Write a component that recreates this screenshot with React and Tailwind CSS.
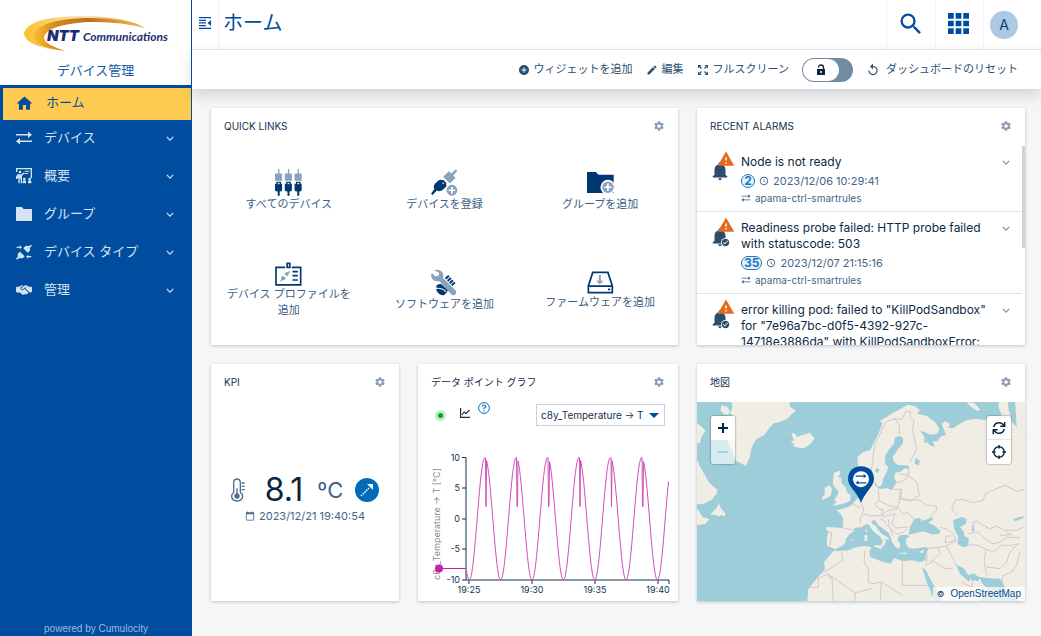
import { useState } from 'react';
import {
  MdHome, MdSearch, MdSettings, MdAddCircle, MdEdit, MdNotifications,
  MdWarning, MdAccessTime, MdCheckCircle, MdCalendarToday, MdReplay
} from 'react-icons/md';
import { FaHandshakeSimple } from 'react-icons/fa6';

const SwapIcon = ({ className }) => (
  <svg viewBox="0 0 16 14" className={className} fill="currentColor" aria-hidden="true">
    <path d="M0 3h12V.6L16 3.800 12 7V4.500H0zM16 11H4v2.400L0 10.200 4 7v2.500h12z" />
  </svg>
);

const PresentIcon = ({ className }) => (
  <svg viewBox="0 0 48 48" className={className} fill="currentColor" aria-hidden="true">
    <path d="M0 0h48v30h-4V4H4v8H0zM26 8h14v3H26zM26 15h10v3H26z" />
    <circle cx="12" cy="12" r="4" />
    <path d="M4 19h12l8-6 2 3-8 7v23h-4V32h-3v14H7V29l-4 4H0v-6z" />
    <circle cx="25" cy="33" r="4" />
    <circle cx="41" cy="33" r="4" />
    <path d="M20 46v-6q0-3 5-3t5 3v6zM36 46v-6q0-3 5-3t5 3v6z" />
  </svg>
);

const FolderIcon = ({ className }) => (
  <svg viewBox="0 0 16 14" className={className} fill="currentColor" aria-hidden="true">
    <path d="M0 0h6l1.500 2H16v12H0z" />
  </svg>
);

const PlugTypeIcon = ({ className }) => (
  <svg viewBox="0 0 48 48" className={className} fill="currentColor" aria-hidden="true">
    <path d="M2 8h9V4l7 6-7 6v-4H2zM46 36h-9v-4l-7 6 7 6v-4h9z" />
    <path d="M45 2l3 3-7 7q4 6-2 11l-4 3-13-13 3-4q7-6 13-2zM3 47l-3-3 6-7q-3-6 2-11l4-3 14 14-4 4q-7 4-12 1z" />
  </svg>
);

const ChevronIcon = ({ className }) => (
  <svg viewBox="0 0 10 6" className={className} fill="none" stroke="currentColor" strokeWidth="1.500" aria-hidden="true">
    <path d="M1 1l4 4 4-4" />
  </svg>
);

const CollapseIcon = () => (
  <svg viewBox="0 0 12 12" className="size-3" fill="currentColor" aria-hidden="true">
    <path d="M0 0h12v1.300H0zM0 2.700h7V4H0zM0 5.300h7v1.300H0zM0 8h7v1.300H0zM0 10.700h12V12H0zM12 3v6L8.500 6z" />
  </svg>
);

const AppsIcon = () => (
  <svg viewBox="0 0 22 22" className="size-[21px]" fill="currentColor" aria-hidden="true">
    <path d="M0 0h6v6H0zM8 0h6v6H8zM16 0h6v6h-6zM0 8h6v6H0zM8 8h6v6H8zM16 8h6v6h-6zM0 16h6v6H0zM8 16h6v6H8zM16 16h6v6h-6z" />
  </svg>
);

const ExpandIcon = () => (
  <svg viewBox="0 0 12 12" className="size-3" aria-hidden="true">
    <path d="M2 2l2.500 2.500M10 2L7.500 4.500M2 10l2.500-2.500M10 10L7.500 7.500" stroke="currentColor" strokeWidth="1.200" />
    <path d="M1 1h3.500L1 4.500zM11 1v3.500L7.500 1zM1 11V7.500L4.500 11zM11 11H7.500L11 7.500z" fill="currentColor" />
  </svg>
);

const UnlockIcon = () => (
  <svg viewBox="0 0 10 12" className="h-3 w-2.5" aria-hidden="true">
    <path d="M2.500 3.500Q2.500 1 5 1t2.500 2.500V6" fill="none" stroke="currentColor" strokeWidth="1.400" />
    <path d="M1 5h8v6H1z" fill="currentColor" />
    <circle cx="5" cy="8" r="1" fill="#fff" />
  </svg>
);

/* Two-tone quick link icons */
const DevicesIcon = () => (
  <svg viewBox="0 0 80 80" className="size-[27px]" aria-hidden="true">
    {[0, 29, 58].map(x => (
      <g key={x} transform={`translate(${x} 0)`}>
        <path d="M9 0h4v13h8v22H0V13h9z" fill="#89a2bf" />
        <path d="M4 38h14v6h3v19q-1 4-7 4v12H8V67q-7 0-8-4V44h4z" fill="#003871" />
        <path d="M8 41h6v4H8z" fill="#d5dfeb" />
      </g>
    ))}
  </svg>
);

const RegisterIcon = () => (
  <svg viewBox="0 0 80 80" className="size-[27px]" aria-hidden="true">
    <path d="M73 1l5 5-12 13 7 7-17 17-20-20 17-16 7 6z" fill="#89a2bf" />
    <path d="M23 33q8-3 15 3t8 15l-10 10q-9 8-19 3L5 77l-5-4 10-14q-5-8 3-17z" fill="#003871" />
    <path d="M30 36l6-4 10 10-4 6z" fill="#003871" />
    <path d="M34 40l4 4" stroke="#fff" strokeWidth="3" />
    <circle cx="62" cy="63" r="16" fill="#89a2bf" />
    <path d="M62 53v20M52 63h20" stroke="#fff" strokeWidth="5" />
  </svg>
);

const AddGroupIcon = () => (
  <svg viewBox="0 0 80 80" className="size-[27px]" aria-hidden="true">
    <path d="M0 9h26l8 8h45v54H0z" fill="#003871" />
    <circle cx="62" cy="54" r="22" fill="#fff" />
    <circle cx="62" cy="54" r="17" fill="#89a2bf" />
    <path d="M62 43v22M51 54h22" stroke="#fff" strokeWidth="5" />
  </svg>
);

const ProfileIcon = () => (
  <svg viewBox="0 0 80 72" className="h-6 w-[27px]" aria-hidden="true">
    <path d="M30 16H2.500v52.500h74V16H50" fill="none" stroke="#003871" strokeWidth="5" />
    <path d="M36 4h8v12h-8z" fill="none" stroke="#003871" strokeWidth="5" />
    <path d="M52 29h16M52 41h16M52 54h16" stroke="#003871" strokeWidth="5" />
    <path d="M43 27l2 3-5 5q1 7-4 8l-8-7q2-6 8-5zM15 57l3-6q-1-8 6-10l8 7q-2 8-10 6l-5 5z" fill="#89a2bf" />
  </svg>
);

const SoftwareIcon = () => (
  <svg viewBox="0 0 80 80" className="size-[27px]" aria-hidden="true">
    <path d="M9 3q19-4 26 9 3 8 0 14l38 38q4 8-2 12-7 4-12-2L25 36Q8 39 2 26q-3-7 0-14l11 10 10-3 1-8z" fill="#89a2bf" />
    <path d="M16 49q12-8 18-1l16 16q-4 10-12 14Q24 79 16 64z" fill="#003871" />
    <path d="M46 22l22 24" stroke="#003871" strokeWidth="13" strokeDasharray="6 3" />
    <path d="M14 58q15-3 24 4l7 6" fill="none" stroke="#fff" strokeWidth="3" />
  </svg>
);

const FirmwareIcon = () => (
  <svg viewBox="0 0 80 68" className="h-[23px] w-[27px]" aria-hidden="true">
    <path d="M17 4h45l13 40v20H4V44zM4 45h72" fill="none" stroke="#003871" strokeWidth="5" />
    <path d="M35 12h6v17h8L38 40 27 29h8z" fill="#89a2bf" />
    <path d="M62 52h7v5h-7z" fill="#003871" />
  </svg>
);

const ThermometerIcon = () => (
  <svg viewBox="0 0 42 70" className="h-6 w-[14px] text-[#4d6d8c]" fill="none" stroke="currentColor" strokeWidth="4" aria-hidden="true">
    <path d="M8 42V12Q9 2 18 2t10 10v30q7 5 7 12-2 13-17 14Q3 67 2 54q0-7 6-12zM18 50V30M32 14h9M32 24h9M32 34h9" />
    <circle cx="18" cy="53" r="8" fill="currentColor" stroke="none" />
  </svg>
);

const Logo = () => (
  <svg viewBox="0 0 150 38" className="h-[38px] w-[150px]" role="img" aria-label="NTT Communications">
    <defs>
      <linearGradient id="swoosh" x1="0" x2="1">
        <stop offset="0" stopColor="#fdc030" />
        <stop offset=".2" stopColor="#d08a1e" />
        <stop offset=".5" stopColor="#c07020" />
        <stop offset="1" stopColor="#f0bf55" />
      </linearGradient>
      <linearGradient id="swooshLight" x1="0" x2="1">
        <stop offset="0" stopColor="#fdc030" />
        <stop offset=".5" stopColor="#f8e0b0" />
        <stop offset="1" stopColor="#e8a030" />
      </linearGradient>
    </defs>
    <path d="M45 37Q3 33 3 19 7 3 58 2 105 2 124 14 98 6 66 6 20 10 17 23q2 9 28 14z" fill="url(#swooshLight)" />
    <path d="M45 37Q10 33 12 20 20 6 62 4q40-1 62 10Q98 7 66 8 24 11 23 24q1 7 22 13z" fill="url(#swoosh)" />
    <text x="26" y="27" fill="#1b2c72" fontFamily="Inter, sans-serif" fontWeight="900" fontStyle="italic" fontSize="15">NTT</text>
    <text x="62" y="27" fill="#1b2c72" fontFamily="Lato, sans-serif" fontWeight="700" fontStyle="italic" fontSize="12">Communications</text>
  </svg>
);

const NAV_ITEMS = [
  { label: 'デバイス', icon: SwapIcon, size: 'h-3.5 w-4' },
  { label: '概要', icon: PresentIcon, size: 'size-4' },
  { label: 'グループ', icon: FolderIcon, size: 'h-3.5 w-4' },
  { label: 'デバイス タイプ', icon: PlugTypeIcon, size: 'size-4' },
  { label: '管理', icon: FaHandshakeSimple, size: 'size-4' }
];

const QUICK_LINKS = [
  { label: 'すべてのデバイス', icon: DevicesIcon },
  { label: 'デバイスを登録', icon: RegisterIcon },
  { label: 'グループを追加', icon: AddGroupIcon },
  { label: 'デバイス プロファイルを追加', icon: ProfileIcon },
  { label: 'ソフトウェアを追加', icon: SoftwareIcon },
  { label: 'ファームウェアを追加', icon: FirmwareIcon }
];

const ALARMS = [
  { text: 'Node is not ready', count: 2, time: '2023/12/06 10:29:41', source: 'apama-ctrl-smartrules', ack: false },
  { text: 'Readiness probe failed: HTTP probe failed with statuscode: 503', count: 35, time: '2023/12/07 21:15:16', source: 'apama-ctrl-smartrules', ack: true },
  { text: 'error killing pod: failed to "KillPodSandbox" for "7e96a7bc-d0f5-4392-927c-14718e3886da" with KillPodSandboxError:', ack: true }
];

const Sidebar = () => (
  <aside className="flex w-48 shrink-0 flex-col bg-[#004d9f]">
    <div className="mr-px flex h-[85px] flex-col items-center bg-white pt-3.5">
      <Logo />
      <div className="mt-2 text-[13px] leading-5 text-[#1357a5]">デバイス管理</div>
    </div>
    <nav className="flex flex-1 flex-col pt-[3px] text-[13px] text-[#d5e2f0]">
      <a href="#home" className="mr-px ml-[3px] flex h-8 items-center bg-[#ffcb52] pb-0.5 pl-3 text-[#004d9f]">
        <MdHome className="size-[19px]" />
        <span className="ml-3">ホーム</span>
      </a>
      {NAV_ITEMS.map(({ label, icon: Icon, size }) => (
        <a key={label} href={`#${label}`} className="flex h-[38px] items-center pr-[18px] pb-0.5 pl-4">
          <Icon className={size} />
          <span className="ml-3 flex-1">{label}</span>
          <ChevronIcon className="h-[5px] w-2" />
        </a>
      ))}
    </nav>
    <div className="text-center font-['Liberation_Sans',sans-serif] text-[10px] leading-[14px] text-[#9dbbdc]">powered by Cumulocity</div>
  </aside>
);

const Header = () => (
  <header className="flex h-[50px] border-b border-[#e2e4e6] bg-white text-[#004d9f]">
    <button aria-label="ナビゲーション" className="flex w-[27px] items-center justify-center border-r border-gray-100 pb-1">
      <CollapseIcon />
    </button>
    <h1 className="flex-1 pt-2 pl-1 text-xl leading-[30px]">ホーム</h1>
    <button aria-label="検索" className="flex w-[49px] items-center justify-center border-l border-gray-100 pb-0.5">
      <MdSearch className="size-7" />
    </button>
    <button aria-label="アプリケーション" className="flex w-12 items-center justify-center border-l border-gray-100 pr-0.5 pb-0.5">
      <AppsIcon />
    </button>
    <div className="flex w-[58px] items-center border-l border-gray-100 pl-1.5">
      <button className="size-7 rounded-full bg-[#adc8e2] text-sm text-[#0b3d70]">A</button>
    </div>
  </header>
);

const ActionBar = () => {
  const [locked, setLocked] = useState(false);

  return (
    <div className="relative z-10 flex h-[39px] items-center justify-end gap-[13px] bg-white pr-[23px] text-[11px] whitespace-nowrap text-[#2c4f70] shadow-[0_6px_14px_rgba(40,55,75,0.18)]">
      <button className="flex items-center gap-1"><MdAddCircle className="size-3" />ウィジェットを追加</button>
      <button className="flex items-center gap-1"><MdEdit className="size-3" />編集</button>
      <button className="flex items-center gap-1"><ExpandIcon />フルスクリーン</button>
      <label className="relative flex">
        <input
          type="checkbox"
          aria-label="ロック"
          checked={locked}
          onChange={e => setLocked(e.target.checked)}
          className="h-6 w-[51px] appearance-none rounded-full bg-[#728ba5]"
        />
        <span className="pointer-events-none absolute top-px left-px flex h-[22px] w-9 items-center justify-center rounded-full bg-white text-[#0a2540]">
          <UnlockIcon />
        </span>
      </label>
      <button className="flex items-center gap-1.5"><MdReplay className="size-3.5" />ダッシュボードのリセット</button>
    </div>
  );
};

const Card = ({ title, className = '', children }) => (
  <section className={`flex min-w-0 flex-col overflow-hidden bg-white shadow-[0_1px_3px_rgba(30,60,90,0.28)] ${className}`}>
    <div className="flex h-[38px] shrink-0 items-center justify-between px-[13px] pb-0.5">
      <h2 className="text-[10px] text-[#14324d]">{title}</h2>
      <button aria-label="設定" className="text-[#8a9cb1]"><MdSettings className="size-3" /></button>
    </div>
    {children}
  </section>
);

const QuickLinks = () => (
  <Card title="QUICK LINKS" className="col-span-2">
    <div className="grid flex-1 grid-cols-3 grid-rows-2">
      {QUICK_LINKS.map(({ label, icon: Icon }) => (
        <a key={label} href={`#${label}`} className="flex flex-col items-center justify-center px-3 pb-2.5 text-center text-[11px] leading-4 text-[#3a5f84]">
          <Icon />
          <span>{label}</span>
        </a>
      ))}
    </div>
  </Card>
);

const RecentAlarms = () => (
  <Card title="RECENT ALARMS">
    <div className="flex min-h-0 flex-1">
      <ul className="min-w-0 flex-1 overflow-hidden">
        {ALARMS.map(alarm => (
          <li key={alarm.text} className="flex border-b border-[#dfe2e5] px-3 pt-2 pb-[5px]">
            <div className="relative mr-2 h-7 w-6 shrink-0 text-[#2b4d6e]">
              <MdNotifications className="absolute top-1.5 left-0 size-[22px]" />
              <MdWarning className="absolute -top-1 left-2 size-[18px] text-[#e56a1f]" />
              {alarm.ack && <MdCheckCircle className="absolute top-[18px] left-3 size-[9px] rounded-full bg-white" />}
            </div>
            <div className="min-w-0 flex-1">
              <p className="text-xs leading-4 text-[#0b2a45]">{alarm.text}</p>
              {alarm.time && (
                <>
                  <div className="mt-0.5 flex h-[18px] items-center gap-1 text-[11px] text-[#43658a]">
                    <span className="min-w-3.5 rounded-full border border-[#1776bf] bg-[#e8f3fb] px-0.5 text-center text-xs leading-3 font-bold text-[#1776bf]">{alarm.count}</span>
                    <MdAccessTime className="size-2.5" />
                    <span>{alarm.time}</span>
                  </div>
                  <div className="flex h-4 items-center gap-1 text-[10px] text-[#43658a]">
                    <SwapIcon className="h-2 w-2.5" />
                    {alarm.source}
                  </div>
                </>
              )}
            </div>
            <button aria-label="詳細" className="ml-1 flex h-4 items-center text-[#7f94aa]">
              <ChevronIcon className="h-[5px] w-2" />
            </button>
          </li>
        ))}
      </ul>
      <div className="h-[102px] w-[3px] bg-[#cfd2d5]" />
    </div>
  </Card>
);

const Kpi = () => (
  <Card title="KPI">
    <div className="flex flex-1 flex-col items-center justify-center pb-2">
      <div className="flex items-center">
        <ThermometerIcon />
        <span className="ml-5 text-[32px] leading-9 text-[#0a2540]">8.1</span>
        <span className="ml-3.5 text-[22px] leading-9 text-[#3f648a]">ºC</span>
        <span className="ml-3 flex size-6 items-center justify-center rounded-full bg-[#006cb8] text-white">
          <svg viewBox="0 0 14 14" className="size-3.5" aria-hidden="true">
            <path d="M1 13l8-8" stroke="currentColor" strokeWidth="1.500" strokeDasharray="1.500 1" />
            <path d="M7 1h6v6z" fill="currentColor" />
          </svg>
        </span>
      </div>
      <div className="flex items-center gap-1 text-[11px] leading-4 text-[#43658a]">
        <MdCalendarToday className="size-2.5" />
        2023/12/21 19:40:54
      </div>
    </div>
  </Card>
);

const yFor = v => 78.75 - v * 6.125;

const buildCurve = () => {
  const period = 31.35;
  const points = [];
  for (let x = 48.5; x <= 250.7; x += 0.5) {
    const phase = (((x - 51.3) / period) % 1 + 1) % 1;
    let v = -10 * Math.cos(phase * 2 * Math.PI);
    // the sensor reports a short drop right after every peak
    if (phase > 0.52 && phase < 0.545) v = 2;
    points.push(`${x},${yFor(v).toFixed(1)}`);
  }
  return points.join(' ');
};

const Y_TICKS = [10, 5, 0, -5, -10];
const X_TICKS = [[51, '19:25'], [114, '19:30'], [177, '19:35'], [240, '19:40']];

const DataPointGraph = () => (
  <Card title="データ ポイント グラフ">
    <div className="flex items-start px-[13px] pt-0.5">
      <span className="mt-1.5 ml-1 flex size-[11px] items-center justify-center rounded-full bg-[#bdeec5]">
        <span className="size-[5px] rounded-full bg-[#08a626]" />
      </span>
      <svg viewBox="0 0 10 10" className="mt-1 ml-3.5 size-2.5 text-[#14324d]" fill="none" stroke="currentColor" strokeWidth="1.200" aria-hidden="true">
        <path d="M.6 0v9.400H10M2 7l2-3 2 1.500L9.500 2" />
      </svg>
      <svg viewBox="0 0 12 12" className="-mt-0.5 ml-2 size-3 text-[#0a6fba]" fill="none" stroke="currentColor" aria-hidden="true">
        <circle cx="6" cy="6" r="5.400" />
        <path d="M4.200 4.800Q4.300 3 6 3t1.800 1.500Q7.800 5.300 6 6.200V7.300M6 8.200v1.200" strokeWidth="1.200" />
      </svg>
      <div className="relative ml-auto flex">
        <select aria-label="データ ポイント" className="h-[22px] w-[129px] appearance-none border border-[#c9d0d7] bg-white px-1 text-[10px] text-[#14324d]">
          <option>c8y_Temperature → T</option>
        </select>
        <svg viewBox="0 0 10 5" className="pointer-events-none absolute top-[9px] right-1.5 h-[5px] w-2.5" aria-hidden="true">
          <path d="M0 0h10L5 5z" fill="#004d9f" />
        </svg>
      </div>
    </div>
    <svg viewBox="0 0 260 161" className="mt-auto w-full" fontSize="9" fill="#14324d">
      <text transform="translate(22 140) rotate(-90)" fill="#8a8a8a">c8y_Temperature → T [℃]</text>
      <path d="M44 17.500h4V140h-4M48 140h203v4M44 48h4M44 79h4M44 109h4" fill="none" stroke="#14324d" />
      {Y_TICKS.map(v => (
        <text key={v} x="42" y={yFor(v) + 3} textAnchor="end">{v}</text>
      ))}
      {X_TICKS.map(([x, label]) => (
        <g key={label}>
          <path d={`M${x} 140v4`} stroke="#14324d" />
          <text x={x} y="153" textAnchor="middle">{label}</text>
        </g>
      ))}
      <polyline points={buildCurve()} fill="none" stroke="#d14db5" strokeWidth="1" />
      <path d="M21 128.500h27" stroke="#c81fa8" />
      <circle cx="21" cy="128.500" r="4" fill="#c81fa8" />
    </svg>
  </Card>
);

const WorldMap = () => (
  <svg viewBox="21 126 984 597" preserveAspectRatio="xMidYMid slice" className="absolute inset-0 size-full bg-[#9dcdd9]" aria-hidden="true">
    <filter id="coast" x="0" y="0" width="1" height="1" colorInterpolationFilters="sRGB">
      <feTurbulence type="fractalNoise" baseFrequency="0.3" numOctaves="3" seed="4" />
      <feDisplacementMap in="SourceGraphic" scale="4" xChannelSelector="R" yChannelSelector="G" />
    </filter>
    <g filter="url(#coast)">
      <rect x="0" y="100" width="1030" height="650" fill="#9dcdd9" />
      <g fill="#f0ede5">
        {/* Greenland, Canada, Iceland */}
        <path d="M120 110H298L300 140 318 152 308 160 290 178 262 188 250 190 238 205 222 226 200 236 190 252 183 270 180 290 168 318 150 308 138 304 130 280 112 245 124 225 135 195 136 175 120 160 128 140z" />
        <path d="M95 136l16 4 8 12-4 14-14-4-10-12zM0 170l21 20 12 8 14 14-12 18-6 20-29 0zM0 300h21l10 22 14 24 14 24 24 20-4 12-14 18-26 12-39 2zM88 424l-8 20-20 20 16 0 10 6 8-6 10 6 2-10-14-16-6-14zM0 450h25l12 20 22 8-14 14-24 4-21 8z" />
        <path d="M304 221l8-2 10 12 14-6 24-6 14 16-12 16-20 14-26-3-8-6 6-4-12-6 10-6z" />
      </g>
      <g transform="translate(390 126)">
        <g fill="#f0ede5">
          {/* Eurasia joined with Africa, inner seas are painted on top */}
          <path d="M112 165L130 150 150 145 160 125 175 95 188 62 178 58 200 45 214 35 240 22 262 8 285 12 300 25 292 35 320 42 345 60 358 80 352 95 330 98 318 92 300 86 310 100 322 120 330 130 344 135 338 118 352 118 360 105 378 98 372 85 365 65 375 58 390 66 385 78 400 78 425 62 440 55 470 50 495 55 510 42 535 48 545 38 535 15 540-20H630V620H-40L-35 560-10 530 15 500 12 480 40 448 48 443 38 438 22 432 20 410 25 390 17 378 22 375 68 378 70 350 62 335 48 325 62 322 85 315 95 308 105 297 118 285 122 266 148 258 150 240 155 215 166 218 165 250 178 262 200 258 215 264 225 250 228 235 222 228 226 212 240 210 252 200 270 198 262 190 235 190 222 180 218 165 235 140 248 125 250 110 240 102 225 105 222 125 205 145 196 160 195 185 205 195 200 210 190 230 185 250 172 256 165 235 158 215 155 200 145 200 128 212 115 200z" />
          <path d="M42 212l18-6 0 12-8 6 12 4 0 14 12 14 6 16 10 8-2 16-16 8-24 6-12 2 12-14-8-4 10-14 4-12-8-8-10-14zM14 258l14-8 8 10-4 22-24 12-2-8 8-10zM440 0l22 2 20 22-12 2-20-14z" />
        </g>
        <g fill="#9dcdd9">
          <path d="M45 442L62 434 75 425 78 410 90 395 102 388 103 378 125 375 135 368 145 365 150 375 160 388 178 402 188 416 184 428 190 434 198 420 194 412 207 414 203 406 192 400 178 390 168 372 155 364 155 356 164 354 174 368 190 380 205 392 212 406 216 420 224 432 235 442 242 430 232 412 240 400 262 398 268 404 258 410 258 426 266 438 282 440 300 438 318 435 325 440 318 455 316 475 300 480 275 475 250 478 222 468 212 485 190 480 150 465 148 450 155 435 135 432 110 435 85 445 48 448z" />
          <path d="M270 375L283 350 300 348 305 357 325 350 335 345 340 350 325 362 345 372 362 388 358 396 335 397 310 388 285 394 266 398z" />
          <path d="M400 355L425 345 440 350 438 365 420 375 432 390 432 402 446 408 445 432 430 436 412 425 415 405 402 380z" />
          <path d="M305 495L318 505 330 530 345 555 365 600H345L322 545zM408 488L430 498 445 520 462 514 475 524 500 528 540 530 550 545 560 570 600 600H480L500 565 490 548 465 535 445 538 420 515z" />
          <path d="M562-10l4 34 10 36 14 16-2-40-4-46zM286 168l14 8-4 14-12-4zM168 198l10 4-4 10-8-4zM312 104l10 16-8 4zM455 386l4-20 4 20z" />
          <path d="M498 368l4 14-4-2zM580 350l30-8 0 6-26 10z" />
        </g>
        <g fill="#f0ede5">
          <path d="M162 430l26 0-4 12-20-8zM133 400l9-2 0 18-8 2zM136 384l6-3-2 14zM238 452l22 0 0 4-20-1zM298 450l16-8-6 12zM90 412l8-2-2 6zM452 528l8 14 12-2 8-12 6 16 16 16-14 24-20 20-50 0z" />
        </g>
        <g fill="none" stroke="#c8b0c2" strokeWidth="2">
          {/* Northern Europe */}
          <path d="M155 200L160 160 165 125 172 112 185 85 200 58 225 50 238 70 238 98M225 50L245 52 258 28 272 30 270 45 282 55 278 85 290 140 270 180M265 198L266 220 238 215M222 240L245 240 266 222 290 240 298 280 270 298 242 290 245 262 218 262" />
          {/* Central Europe and the Balkans */}
          <path d="M242 290L265 292 300 295 320 310 348 312 350 325 330 345M175 265L177 295 163 305M177 295L200 308 232 318 238 300 240 265M232 318L250 335 262 332 283 352M125 270L120 300 132 322 125 338M90 300L106 310 120 318M163 305L175 320 195 325M120 345L135 336 150 342 185 340 205 325 232 320M120 345L122 365M185 325L190 345 225 335 215 365 230 378 266 375M180 350L195 358 200 368 212 380 218 400M205 352L208 375M212 382L232 396 250 390 262 380M70 378L100 385M20 388L35 392 30 432" />
          {/* Middle East and Central Asia */}
          <path d="M362 375L385 384 398 392 408 415 375 422 378 402 395 402M325 440L355 436 378 432 405 418M355 440L362 455 330 480M378 432L400 470 408 490M320 490L340 478 375 500 400 498M322 455L318 490M412 340L395 320 405 295 430 292 460 302 490 295 495 275 525 262 555 250 590 268 612 262M460 390V360L472 358 485 368 510 380 530 372 550 385 590 385 610 375M445 395L475 390 500 415 520 425 540 420 560 405 600 408M540 400L575 398 560 390M445 428L475 430 498 442 492 475 500 520M498 442L520 450 545 430 575 430 600 425M500 495L540 500 560 480 570 450 590 430M545 540L550 520 575 510 590 490 600 450M425 540L455 555 458 530" />
          {/* Africa */}
          <path d="M65 450L68 475 30 500 0 515M22 515L105 572 155 560M135 445L132 480 145 500 145 540 160 545 185 540 247 580M247 478V550H325M105 572V600M22 520L36 530 40 600M-36 556H-5L-5 530 22 515M185 540L180 600" />
        </g>
      </g>
    </g>
    <path d="M21 217h984" stroke="#b4d9e2" strokeWidth="1" opacity=".6" />
  </svg>
);

const MapCard = () => (
  <Card title="地図">
    <div className="relative flex flex-1 items-start justify-between p-3.5">
      <WorldMap />
      <div className="relative flex w-6 flex-col overflow-hidden rounded-xs shadow-[0_0_2px_rgba(0,0,0,0.6)]">
        <button aria-label="拡大" className="flex h-6 items-center justify-center bg-white text-[#0a2540]">
          <svg viewBox="0 0 12 12" className="size-3" stroke="currentColor" strokeWidth="2" aria-hidden="true"><path d="M6 1v10M1 6h10" /></svg>
        </button>
        <button aria-label="縮小" disabled className="flex h-6 items-center justify-center bg-white/60 text-[#b3cdd8]">
          <svg viewBox="0 0 12 12" className="size-3" stroke="currentColor" strokeWidth="2" aria-hidden="true"><path d="M1 6h10" /></svg>
        </button>
      </div>
      <svg viewBox="0 0 78 110" className="absolute top-16 left-1/2 h-[37px] w-[26px] -translate-x-1/2" aria-label="デバイス">
        <path d="M39 110Q33 92 12 66 0 52 0 38 2 2 39 0q37 2 39 38 0 14-12 28-21 26-27 44z" fill="#004d9f" />
        <circle cx="39" cy="39" r="24" fill="#fff" />
        <path d="M23 28h24v-5l8 7-8 6v-4H23zM55 48H31v-5l-8 7 8 6v-4h24z" fill="#004d9f" />
      </svg>
      <div className="relative flex w-6 flex-col overflow-hidden rounded-xs bg-white text-[#0a2540] shadow-[0_0_2px_rgba(0,0,0,0.6)]">
        <button aria-label="更新" className="flex h-6 items-center justify-center border-b border-gray-200">
          <svg viewBox="0 0 16 16" className="size-3.5" fill="none" stroke="currentColor" strokeWidth="1.700" aria-hidden="true">
            <path d="M2 7q1-5 6-5 4 0 6 4M14 9q-1 5-6 5-4 0-6-4M14.500 1v5h-5M1.500 15v-5h5" />
          </svg>
        </button>
        <button aria-label="中央に表示" className="flex h-6 items-center justify-center">
          <svg viewBox="0 0 16 16" className="size-3.5" fill="none" stroke="currentColor" strokeWidth="1.600" aria-hidden="true">
            <circle cx="8" cy="8" r="6" />
            <path d="M8 0v4M8 12v4M0 8h4M12 8h4" />
          </svg>
        </button>
      </div>
      <div className="absolute right-0 bottom-0 flex items-center gap-1.5 bg-white/70 px-1 text-[10px] leading-[14px] text-[#14324d]">
        <span className="text-[8px]">©</span>
        <a href="#osm" className="font-['Liberation_Sans',sans-serif] text-[#0b4a8a]">OpenStreetMap</a>
      </div>
    </div>
  </Card>
);

const App = () => (
  <div className="flex min-h-screen bg-[#f6f6f6] font-[Inter,'Noto_Sans_CJK_JP',sans-serif]">
    <Sidebar />
    <div className="flex min-w-0 flex-1 flex-col">
      <Header />
      <ActionBar />
      <main className="grid auto-rows-[237px] grid-cols-[188fr_260fr_328fr] gap-[19px] py-[19px] pr-4 pl-[19px]">
        <QuickLinks />
        <RecentAlarms />
        <Kpi />
        <DataPointGraph />
        <MapCard />
      </main>
    </div>
  </div>
);

export default App;
